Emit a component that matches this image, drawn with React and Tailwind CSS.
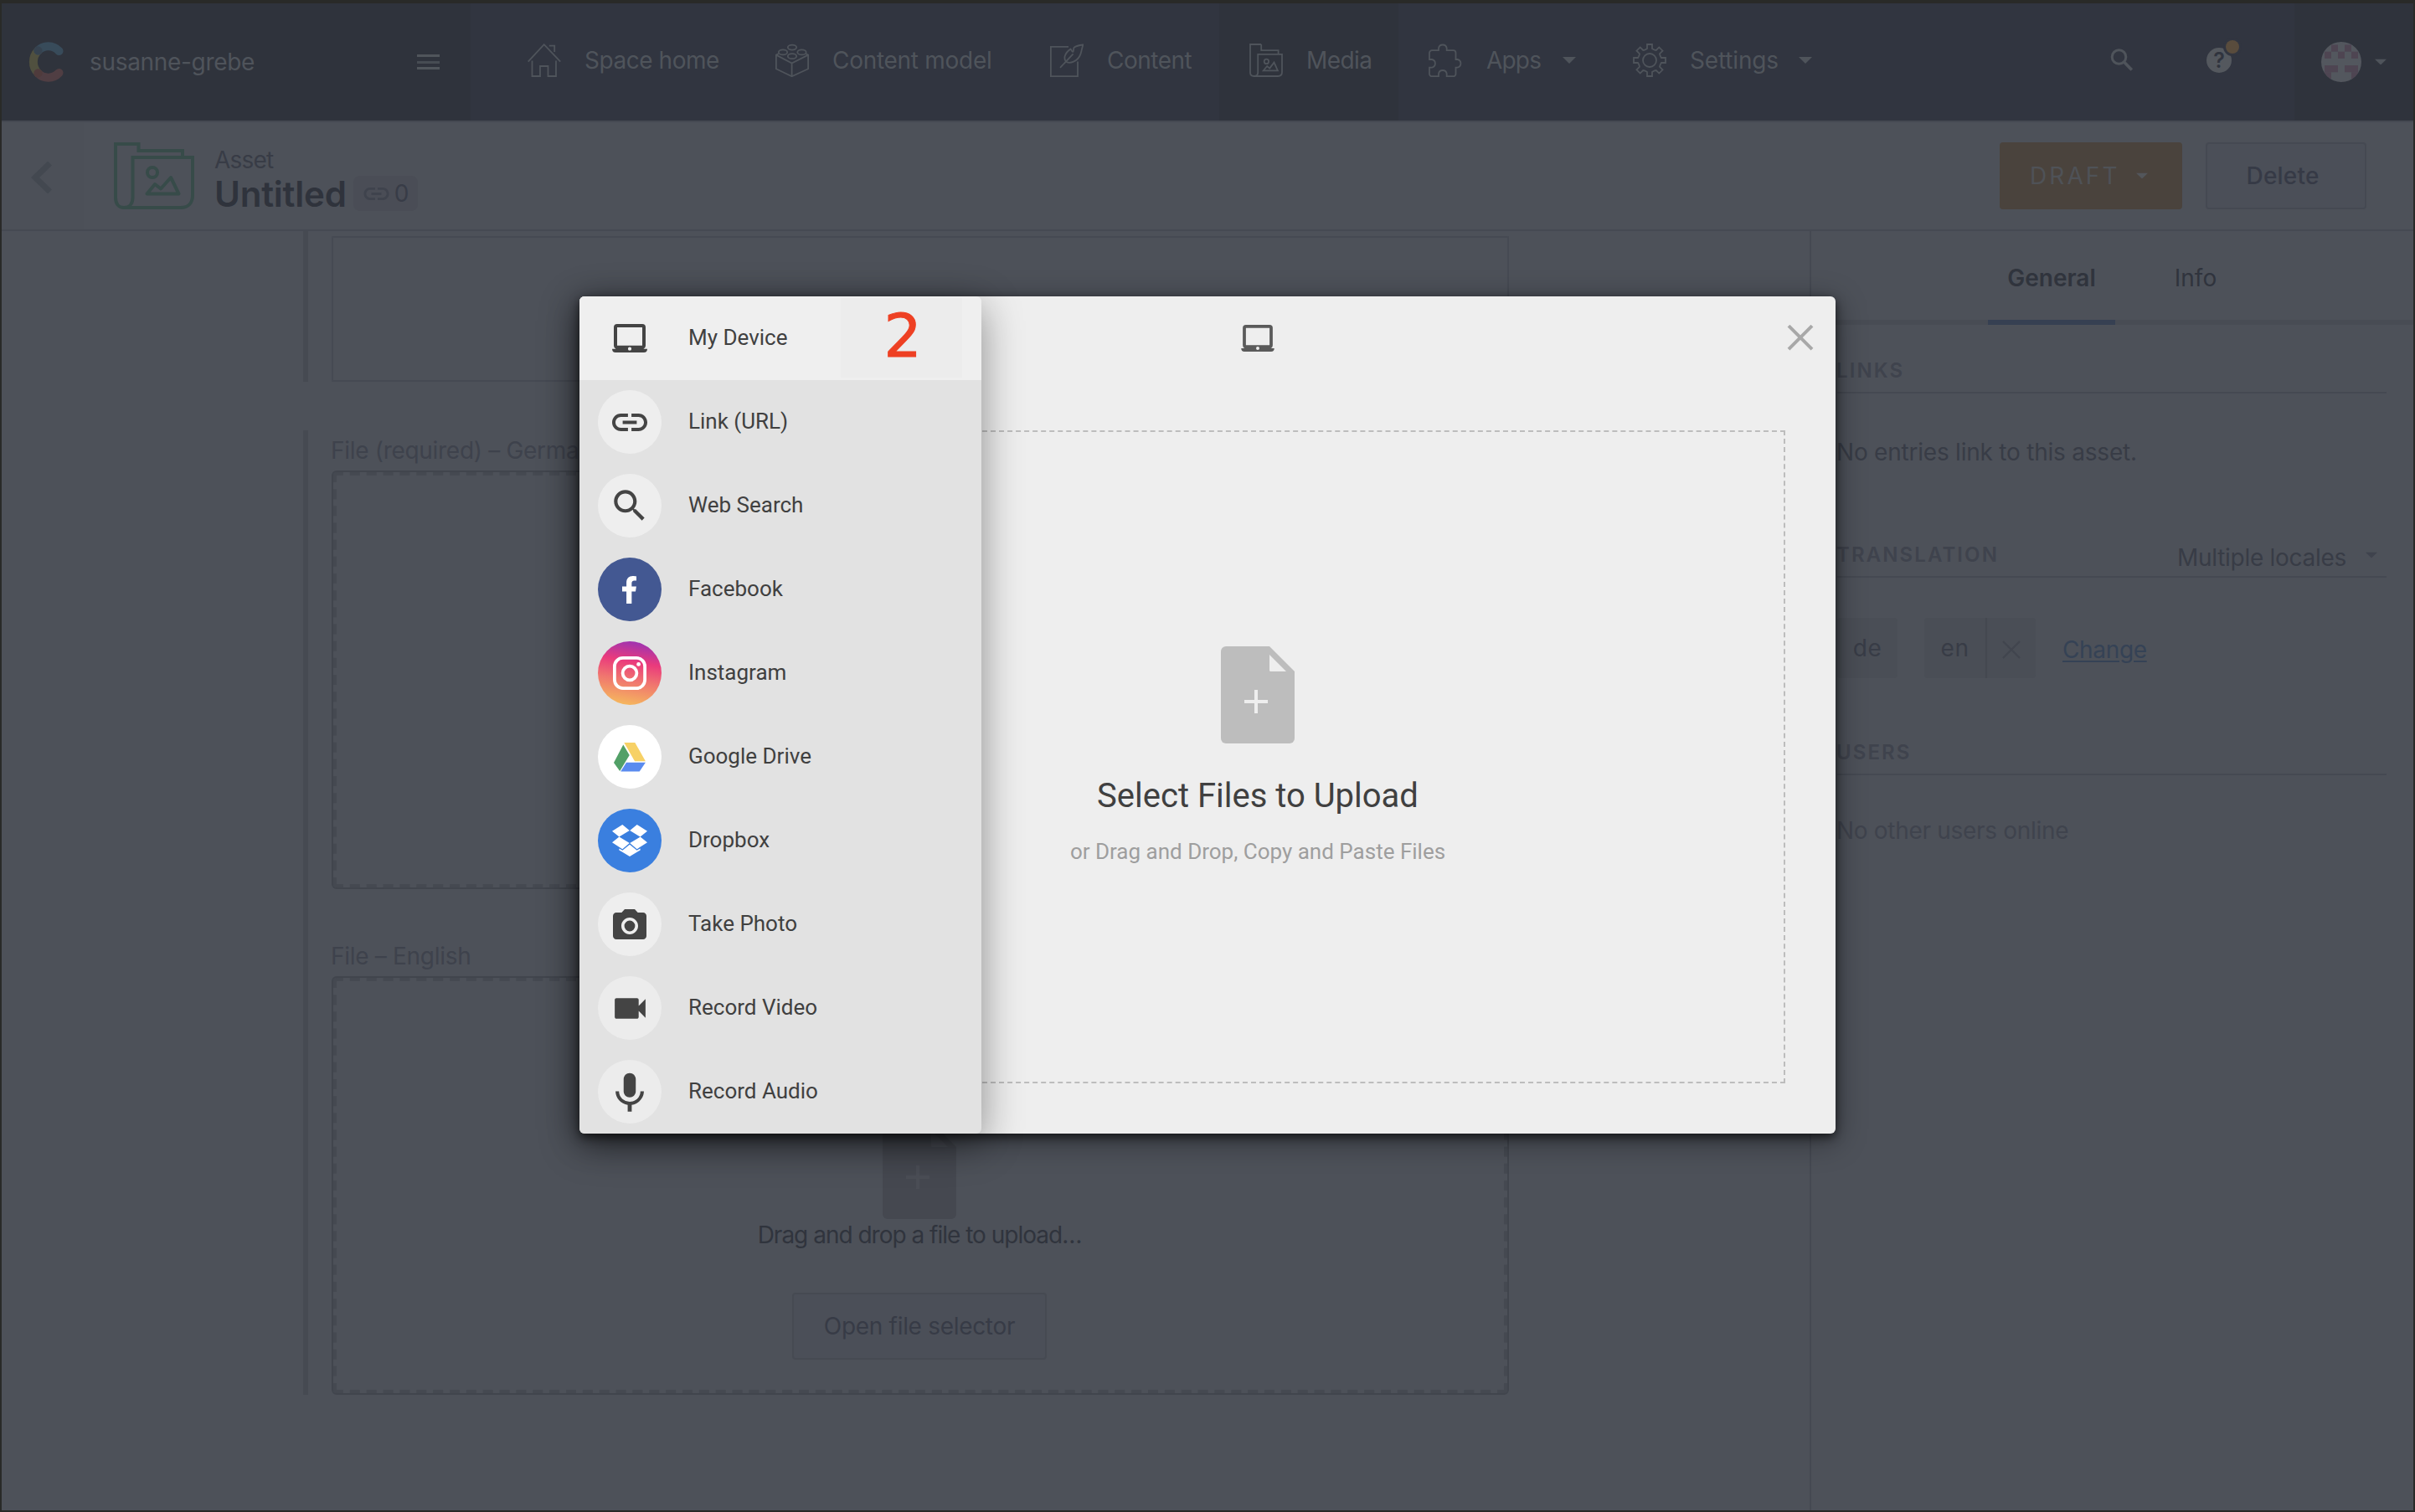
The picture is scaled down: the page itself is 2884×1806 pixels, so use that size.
import React from 'react';

function Caret({ className = '' }) {
  return (
    <svg className={className} width="16" height="8" viewBox="0 0 16 8" fill="currentColor">
      <path d="M0 0h16L8 8z" />
    </svg>
  );
}

function NavIcon({ children }) {
  return (
    <svg className="shrink-0" width="40" height="40" viewBox="0 0 40 40" fill="none" stroke="currentColor" strokeWidth="1.8">
      {children}
    </svg>
  );
}

const gearPath = (() => {
  const pts = [];
  for (let k = 0; k < 8; k++) {
    const a = (k * Math.PI) / 4;
    const c = Math.cos(a);
    const s = Math.sin(a);
    [[-4.6, -13], [-3, -14], [-3, -19], [3, -19], [3, -14], [4.6, -13]].forEach(([x, y]) => {
      pts.push(`${(20 + x * c - y * s).toFixed(2)} ${(20 + x * s + y * c).toFixed(2)}`);
    });
  }
  return `M${pts.join('L')}Z`;
})();

const icons = {
  home: (
    <NavIcon>
      <path d="M.7 21.7 19.7 1.2 39.2 21.7M25.8 2.7H32.2V10M5.5 20.5V39H15V27H24.5V39H34V20.5" />
    </NavIcon>
  ),
  model: (
    <NavIcon>
      <ellipse cx="20" cy="4.6" rx="5.2" ry="3" />
      <ellipse cx="9" cy="10.4" rx="5.2" ry="3" />
      <ellipse cx="31.5" cy="10.4" rx="5.2" ry="3" />
      <ellipse cx="20" cy="15.2" rx="5.2" ry="3" />
      <path d="M4 12 .9 13.6V30.2L19.6 39.2 39.1 30.2V13.6L36 12M.9 13.6 19.6 23.5 39.1 13.6M19.6 23.5V39" />
    </NavIcon>
  ),
  content: (
    <NavIcon>
      <path d="M22 3.9H.9V39.2H33V21.5" />
      <path d="M39.3 1.5C35 2 31 3 28.6 4.8 27.8 6 28.4 8.6 27.4 9.8 26 10.2 25.8 7.6 24.6 6.6 21.5 8.4 18.8 11.6 17.6 15.2 17 18.4 17.8 20.6 19.6 22 22 23.2 25.4 22.8 28 21.6 31.6 20 34.8 17.2 36.4 12.6 37.6 9 38.2 5.2 39.3 1.5ZM12 28.8 27.6 12.4" />
    </NavIcon>
  ),
  media: (
    <NavIcon>
      <path d="M14.2 1V8.2H34.6V12.6M14.2 1H1V34.5C1 37.5 3 39 5.5 39H34C37.5 39 39 37 39 34V12.9H10.2V34.5C10.2 37.5 8 39 5.5 39" />
      <circle cx="20.4" cy="21.4" r="2.7" />
      <path d="M16.8 32.3 21.2 27 24.2 29.6 29.5 22.6 33.9 32.3Z" />
    </NavIcon>
  ),
  apps: (
    <NavIcon>
      <path d="M4 8.2H12V5.7a4.9 4.9 0 0 1 9.7 0V8.2H29.5a3 3 0 0 1 3 3V19H34.5a4.9 4.9 0 0 1 0 9.6H32.5V36.2a3 3 0 0 1-3 3H21.7V36.2a4.9 4.9 0 0 0-9.7 0V39.2H4a3 3 0 0 1-3-3V28.6H4a4.9 4.9 0 0 0 0-9.6H1V11.2a3 3 0 0 1 3-3z" />
    </NavIcon>
  ),
  settings: (
    <NavIcon>
      <path d={gearPath} />
      <circle cx="20" cy="20" r="8" />
    </NavIcon>
  ),
};

function NavItem({ icon, label, className, caret, track }) {
  return (
    <div className={`flex h-full items-center pb-1 pl-9 ${className}`}>
      {icons[icon]}
      <span className={`ml-7 whitespace-nowrap ${track}`}>{label}</span>
      {caret && <Caret className={caret} />}
    </div>
  );
}

function Logo() {
  return (
    <svg width="42" height="48" viewBox="0 0 42 48" fill="none" strokeWidth="10" strokeLinecap="round">
      <path d="M11.500 10.500A19 19 0 0 0 11.500 37.500" stroke="#50503f" />
      <path d="M11.500 10.500C18 3.500 29.500 3.500 36.500 11" stroke="#384b5a" />
      <path d="M11.500 37.500C18 44.500 29.500 44.500 36.500 37" stroke="#503e43" />
      <circle cx="11.500" cy="10.500" r="5" fill="#36424f" />
      <circle cx="11.500" cy="37.500" r="5" fill="#4f3b3c" />
    </svg>
  );
}

function Avatar() {
  const cells = [[1, 0], [3, 0], [0, 1], [2, 1], [4, 1], [0, 3], [1, 3], [3, 3], [4, 3], [0, 4], [4, 4]];
  return (
    <div className="size-12 overflow-hidden rounded-full bg-[#53575e]">
      <svg width="48" height="48" viewBox="0 0 48 48" fill="#4e4552">
        {cells.map(([x, y]) => (
          <rect key={`${x}-${y}`} x={4 + x * 8} y={3.5 + y * 8.2} width="8" height="8.2" />
        ))}
      </svg>
    </div>
  );
}

function TopBar() {
  return (
    <div className="flex h-[140px] shrink-0 bg-[#313540] text-[28px] text-[#4f545b]">
      <div className="flex w-[560px] items-center bg-[#2f333c] pr-9 pl-8">
        <Logo />
        <span className="ml-[31px] tracking-[-0.32px]">susanne-grebe</span>
        <div className="mr-px ml-auto flex flex-col gap-[4.5px]">
          <div className="h-[3px] w-[27px] bg-[#50555b]" />
          <div className="h-[3px] w-[27px] bg-[#474c53]" />
          <div className="h-[3px] w-[27px] bg-[#50555b]" />
        </div>
      </div>
      <div className="ml-8 flex flex-1">
        <NavItem icon="home" label="Space home" className="w-[296px]" track="tracking-[-0.46px]" />
        <NavItem icon="model" label="Content model" className="w-[328px]" track="tracking-[-0.28px]" />
        <NavItem icon="content" label="Content" className="w-[238px]" track="tracking-[-0.5px]" />
        <NavItem icon="media" label="Media" className="w-[214px] bg-[#2f333c]" track="tracking-[-0.6px]" />
        <NavItem icon="apps" label="Apps" className="w-[244px]" caret="ml-[26px]" track="pl-px tracking-[-0.8px]" />
        <NavItem icon="settings" label="Settings" className="w-[280px]" caret="ml-6" track="tracking-[-0.15px]" />
        <svg className="mt-[53px] ml-auto" width="28" height="28" viewBox="0 0 28 28" fill="none" stroke="currentColor" strokeWidth="3">
          <circle cx="10.5" cy="11" r="8.3" />
          <path d="m16.5 17 9.3 9.5" strokeWidth="3.6" />
        </svg>
        <svg className="mt-[38px] mr-[61px] ml-[87px]" width="44" height="48" viewBox="0 0 44 48">
          <circle cx="15" cy="30" r="15" fill="#54585e" />
          <text x="15" y="39" textAnchor="middle" fontSize="25" fontWeight="600" fill="#30343e" fontFamily="Inter">?</text>
          <circle cx="31" cy="14" r="11" fill="#313540" />
          <circle cx="31" cy="14" r="8" fill="#594c3d" />
        </svg>
      </div>
      <div className="flex w-[142px] items-center bg-[#2f333c] pl-8">
        <Avatar />
        <Caret className="ml-[15px] scale-90" />
      </div>
    </div>
  );
}

function LinkGlyph({ className }) {
  return (
    <svg className={className} viewBox="2 7 20 10" fill="currentColor">
      <path d="M3.9 12c0-1.71 1.39-3.1 3.1-3.1h4V7H7c-2.76 0-5 2.24-5 5s2.24 5 5 5h4v-1.9H7c-1.71 0-3.1-1.39-3.1-3.1zM8 13h8v-2H8v2zm9-6h-4v1.9h4c1.71 0 3.1 1.39 3.1 3.1s-1.39 3.1-3.1 3.1h-4V17h4c2.76 0 5-2.24 5-5s-2.24-5-5-5z" />
    </svg>
  );
}

function AssetHeader() {
  return (
    <div className="flex h-[132px] shrink-0 items-center border-y-2 border-[#454952] bg-[#4d5159] pr-14">
      <div className="flex h-full w-[98px] items-center bg-[#4c5058] pt-[3px] pl-[35px]">
        <svg width="25" height="38" viewBox="0 0 25 38" fill="none" stroke="#434850" strokeWidth="7">
          <path d="M22.5 2 5 19 22.5 36" />
        </svg>
      </div>
      <svg className="ml-9" width="96" height="80" viewBox="0 0 96 80" fill="none" stroke="#374b49" strokeWidth="4">
        <path d="M29.5 2V10H82V18M31.5 2H2V66C2 74 6 78 12 78H80C89 78 94 72 94 63V18H22.5V66C22.5 74 18 78 12 78" />
        <circle cx="46" cy="36" r="6" />
        <path d="M39.5 61.5 49 50 56 55.500 68 42 77.500 61.500Z" strokeLinejoin="round" />
      </svg>
      <div className="mt-2 ml-6">
        <div className="text-[28px] leading-[34px] tracking-[-0.8px] text-[#383c46]">Asset</div>
        <div className="flex items-center gap-2">
          <h1 className="pt-px text-[42px] leading-[46px] font-semibold tracking-[-0.2px] text-[#2f333c]">Untitled</h1>
          <div className="flex h-[42px] w-[77px] items-center gap-1.5 rounded-lg bg-[#4a4d56] pl-3 text-[28px] text-[#383c47]">
            <LinkGlyph className="h-[15px] w-[31px] text-[#3f434d]" />
            <span>0</span>
          </div>
        </div>
      </div>
      <button className="ml-auto flex h-20 w-[218px] items-center rounded-[4px] bg-[#4a433d] pl-9 text-[28px] tracking-[3.1px] text-[#4f5257]">
        DRAFT
        <Caret className="ml-[18px] scale-90 text-[#53565b]" />
      </button>
      <button className="ml-7 h-20 w-48 rounded-[4px] border-2 border-[#454952] bg-[#4b4f58] pr-2 text-[28px] font-medium tracking-[0.2px] text-[#363a46]">
        Delete
      </button>
    </div>
  );
}

function FileGlyph({ color, cut }) {
  return (
    <svg className="shrink-0" width="88" height="116" viewBox="0 0 88 116">
      <path d="M6 0H58L88 30V110a6 6 0 0 1-6 6H6a6 6 0 0 1-6-6V6a6 6 0 0 1 6-6z" fill={color} />
      <path d="M58 10V28.500a1.500 1.500 0 0 0 1.500 1.500H78zM40 52h4v12h12v4H44v12h-4V68H28v-4h12z" fill={cut} />
    </svg>
  );
}

function DropBox({ children }) {
  return (
    <div className="relative flex h-[500px] flex-col items-center rounded-md border-2 border-[#41454d]">
      <div className="absolute inset-0 h-1/2 w-1/2 origin-top-left scale-200 rounded-[2px] border-2 border-dashed border-[#454951]" />
      {children}
    </div>
  );
}

function Editor() {
  return (
    <div className="w-[2159px] pl-[360px] text-[28px]">
      <div className="h-[180px] w-[1440px] border-l-[6px] border-[#464a52] pt-1.5 pl-7">
        <div className="h-[174px] w-[1406px] border-2 border-[#464a53]" />
      </div>
      <div className="mt-[58px] h-[1152px] w-[1440px] border-l-[6px] border-[#464a52] pl-7">
        <div className="w-[1406px]">
          <div className="-ml-px h-12 leading-[48px] tracking-[-0.3px] text-[#3e424c]">File (required) – German</div>
          <DropBox />
          <div className="mt-14 -ml-px h-12 leading-[48px] tracking-[-0.3px] text-[#3e424c]">File – English</div>
          <DropBox>
            <div className="mt-[172px] mr-0.5 flex flex-col items-center">
              <FileGlyph color="#454850" cut="#4b4e56" />
              <p className="h-9 pt-px leading-9 tracking-[-1px] text-[#30343d]">Drag and drop a file to upload…</p>
              <button className="mt-[52px] h-20 w-[304px] rounded-[4px] border-2 border-[#464a52] bg-[#4b4f58] tracking-[-0.31px] text-[#373b46]">
                Open file selector
              </button>
            </div>
          </DropBox>
        </div>
      </div>
    </div>
  );
}

function SectionTitle({ children, className, extra }) {
  return (
    <div className={`flex h-[42px] justify-between border-b-2 border-[#454952] ${className}`}>
      <h2 className="-ml-px text-[24px] leading-[30px] font-semibold tracking-[2.100px] text-[#3f434d]">{children}</h2>
      {extra}
    </div>
  );
}

function Aside() {
  return (
    <div className="flex-1 border-l-2 border-[#454952] text-[28px]">
      <div className="flex h-28 justify-center gap-12 border-b-6 border-[#484c54] pr-px text-[#30343d]">
        <div className="h-28 w-[152px] border-b-6 border-[#364052] pt-[5px] text-center leading-[102px] font-semibold">General</div>
        <div className="w-24 pt-[5px] text-center leading-[102px]">Info</div>
      </div>
      <div className="pr-8 pl-[31px]">
        <SectionTitle className="mt-10">LINKS</SectionTitle>
        <p className="mt-[50px] -ml-px h-10 leading-10 tracking-[-0.22px] text-[#383c46]">No entries link to this asset.</p>
        <SectionTitle
          className="mt-[88px]"
          extra={
            <div className="flex pr-2.5 text-[#383c46]">
              <span className="leading-[36px] tracking-[-0.29px]">Multiple locales</span>
              <Caret className="mt-[11px] ml-[22px] scale-90 text-[#3f434d]" />
            </div>
          }
        >
          TRANSLATION
        </SectionTitle>
        <div className="mt-12 flex h-[72px] items-center gap-8 text-[#383c46]">
          <div className="flex h-[72px] w-[72px] items-center justify-center rounded-[4px] bg-[#4a4e56] tracking-[0.5px]">de</div>
          <div className="flex h-[72px] rounded-[4px] bg-[#4a4e56]">
            <span className="w-[73px] text-center leading-[72px] tracking-[0.5px]">en</span>
            <span className="flex w-[60px] items-center justify-center border-l-2 border-[#444850] pt-1">
              <svg width="22" height="22" viewBox="0 0 22 22" stroke="#41454e" strokeWidth="2.200">
                <path d="m1 1 20 20M21 1 1 21" />
              </svg>
            </span>
          </div>
          <a className="pt-1 tracking-[-0.35px] text-[#354255] underline decoration-2 underline-offset-3">Change</a>
        </div>
        <SectionTitle className="mt-[74px]">USERS</SectionTitle>
        <p className="mt-[46px] -ml-px h-10 leading-10 tracking-[-0.3px] text-[#3f434d]">No other users online</p>
      </div>
    </div>
  );
}

function LaptopGlyph({ className }) {
  return (
    <svg className={className} viewBox="0 0 42 34" fill="currentColor" fillRule="evenodd">
      <path d="M6 0H36a4 4 0 0 1 4 4V26a4 4 0 0 1-2.500 3.700H42C42 32.400 40.500 34 38 34H4C1.500 34 0 32.400 0 29.700H4.500A4 4 0 0 1 2 26V4A4 4 0 0 1 6 0ZM6 4V25.700H36V4ZM21 27.600a2.100 2.100 0 1 0 0 4.200a2.100 2.100 0 1 0 0-4.200Z" />
    </svg>
  );
}

function Material({ d, className }) {
  return (
    <svg className={className} viewBox="0 0 24 24" fill="currentColor">
      <path d={d} />
    </svg>
  );
}

const sources = [
  {
    label: 'Link (URL)',
    bg: 'bg-[#eeeeee]',
    icon: <LinkGlyph className="h-[21px] w-[42px]" />,
  },
  {
    label: 'Web Search',
    bg: 'bg-[#eeeeee]',
    icon: (
      <Material
        className="size-[50px]"
        d="M15.500 14h-.790l-.280-.270C15.410 12.590 16 11.110 16 9.500 16 5.910 13.090 3 9.500 3S3 5.910 3 9.500 5.910 16 9.500 16c1.610 0 3.090-.590 4.230-1.570l.270.280v.790l5 4.990L20.490 19l-4.990-5zm-6 0C7.010 14 5 11.990 5 9.500S7.010 5 9.500 5 14 7.010 14 9.500 11.990 14 9.500 14z"
      />
    ),
  },
  {
    label: 'Facebook',
    bg: 'bg-[#435892]',
    icon: (
      <svg className="mr-0.5" width="17" height="33" viewBox="22.890 0 272 512" preserveAspectRatio="none" fill="#fff">
        <path d="M279.140 288l14.220-92.660h-88.910v-60.130c0-25.350 12.420-50.060 52.240-50.060h40.420V6.260S260.430 0 225.360 0c-73.220 0-121.080 44.380-121.080 124.720v70.620H22.890V288h81.390v224h100.170V288z" />
      </svg>
    ),
  },
  {
    label: 'Instagram',
    bg: 'bg-[linear-gradient(190deg,#9433b8_3%,#ea3a7c_34%,#f0766f_60%,#f6c05b_98%)]',
    icon: (
      <svg width="42" height="42" viewBox="0 0 42 42" fill="none" stroke="#fff" strokeWidth="3.800">
        <rect x="2.900" y="2.900" width="36.200" height="36.200" rx="10" />
        <circle cx="21" cy="21" r="8.400" />
        <circle cx="31.600" cy="10.400" r="2.400" fill="#fff" stroke="none" />
      </svg>
    ),
  },
  {
    label: 'Google Drive',
    bg: 'bg-white',
    icon: (
      <svg width="38" height="35" viewBox="0 0 38 35">
        <path d="M11.300 2.600 18.700 15 7.200 34 0 24Z" fill="#52a067" />
        <path d="M12.300 0H25.300L37.900 22.200H25Z" fill="#f7d166" />
        <path d="M15 23.800H37.900L30.700 34.600H8.200Z" fill="#5a8bef" />
      </svg>
    ),
  },
  {
    label: 'Dropbox',
    bg: 'bg-[#3a7fdf]',
    icon: (
      <svg width="42" height="38" viewBox="0 0 42 38" fill="#fff">
        <path d="M12.300 0 20.800 7 8.400 14.600 0 7.700ZM29.700 0 21.200 7 33.600 14.600 42 7.700ZM8.400 14.600 20.800 22.100 12.300 29.200 0 21.300ZM33.600 14.600 21.200 22.100 29.700 29.200 42 21.300ZM8.400 28.400 12.400 30.800 21 23.800 29.600 30.800 33.600 28.400V30.400L21 38 8.400 30.400Z" />
      </svg>
    ),
  },
  {
    label: 'Take Photo',
    bg: 'bg-[#eeeeee]',
    icon: (
      <Material
        className="mt-[3px] size-[48px]"
        d="M9 2 7.170 4H4c-1.100 0-2 .900-2 2v12c0 1.100.900 2 2 2h16c1.100 0 2-.900 2-2V6c0-1.100-.900-2-2-2h-3.170L15 2H9zm3 15c-2.760 0-5-2.240-5-5s2.240-5 5-5 5 2.240 5 5-2.240 5-5 5zM12 8.800a3.200 3.200 0 1 0 0 6.400a3.200 3.200 0 1 0 0-6.400z"
      />
    ),
  },
  {
    label: 'Record Video',
    bg: 'bg-[#ececec]',
    icon: (
      <Material
        className="size-[49px]"
        d="M17 10.500V7c0-.550-.450-1-1-1H4c-.550 0-1 .450-1 1v10c0 .550.450 1 1 1h12c.550 0 1-.450 1-1v-3.500l4 4v-11l-4 4z"
      />
    ),
  },
  {
    label: 'Record Audio',
    bg: 'bg-[#ececec]',
    icon: (
      <Material
        className="mt-1 size-[58px]"
        d="M12 14c1.660 0 2.990-1.340 2.990-3L15 5c0-1.660-1.340-3-3-3S9 3.340 9 5v6c0 1.660 1.340 3 3 3zm5.300-3c0 3-2.540 5.100-5.300 5.100S6.700 14 6.700 11H5c0 3.410 2.720 6.230 6 6.720V21h2v-3.280c3.280-.480 6-3.300 6-6.720h-1.700z"
      />
    ),
  },
];

function SourceDrawer() {
  return (
    <div className="absolute inset-y-0 left-0 w-[480px] overflow-hidden rounded-md bg-[#e2e2e2] font-[Roboto,sans-serif] text-[26px] text-[#404040] shadow-[0_12px_48px_rgba(0,0,0,0.42)]">
      <div className="flex h-[100px] items-center bg-[#efefef] pl-[22px]">
        <div className="flex size-[76px] items-center justify-center">
          <LaptopGlyph className="h-[34px] w-[42px] text-[#444444]" />
        </div>
        <span className="-mt-0.5 ml-8">My Device</span>
        <div className="mt-[-1px] mr-[23px] ml-auto flex h-[95px] w-[145px] items-center justify-center bg-[#ececec] pb-1 pl-[3px] font-['DejaVu_Sans',sans-serif] text-[71px] leading-none text-[#ee4023] [-webkit-text-stroke:1px_#ee4023]">
          2
        </div>
      </div>
      {sources.map((s) => (
        <div key={s.label} className="flex h-[100px] items-center pl-[22px]">
          <div className={`flex size-[76px] items-center justify-center overflow-hidden rounded-full text-[#444444] ${s.bg}`}>
            {s.icon}
          </div>
          <span className="-mt-0.5 ml-8">{s.label}</span>
        </div>
      ))}
    </div>
  );
}

function UploadModal() {
  return (
    <div className="absolute inset-0 flex items-start justify-center pt-[350px]">
      <div className="relative h-[1000px] w-[1500px] rounded-md shadow-[0_8px_36px_rgba(0,0,0,0.42),0_4px_12px_rgba(0,0,0,0.6)]">
        <div className="h-full overflow-hidden rounded-md bg-[#eeeeee] pl-[120px]">
          <div className="relative flex h-[100px] items-center justify-center">
            <LaptopGlyph className="h-[32px] w-[40px] text-[#5a5a5a]" />
            <svg className="absolute top-[34px] right-[26px]" width="32" height="31" viewBox="0 0 32 31" stroke="#a8a8a8" strokeWidth="4">
              <path d="M2 1.200 30 29.200M30 1.200 2 29.200" />
            </svg>
          </div>
          <div className="mx-[60px] mt-[60px] flex h-[780px] flex-col items-center border-2 border-dashed border-[#bdbdbd] pt-64 font-[Roboto,sans-serif]">
            <FileGlyph color="#bdbdbd" cut="#eeeeee" />
            <h2 className="mt-[33px] h-[60px] text-[40px] leading-[60px] text-[#404040]">Select Files to Upload</h2>
            <p className="mt-4 h-10 text-[26px] leading-10 text-[#9e9e9e]">or Drag and Drop, Copy and Paste Files</p>
          </div>
        </div>
        <SourceDrawer />
      </div>
    </div>
  );
}

export default function App() {
  return (
    <div className="relative flex h-[1806px] w-[2884px] flex-col overflow-hidden border-2 border-t-4 border-[#292a28] bg-[#4d5159] font-[Inter,sans-serif]">
      <TopBar />
      <AssetHeader />
      <div className="flex min-h-0 flex-1">
        <Editor />
        <Aside />
      </div>
      <UploadModal />
    </div>
  );
}
